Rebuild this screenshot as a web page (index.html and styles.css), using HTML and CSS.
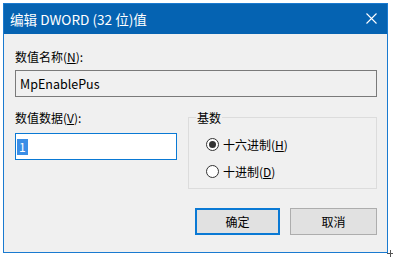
FILE: index.html
```html
<!DOCTYPE html>
<html lang="zh-CN">
<head>
<meta charset="utf-8">
<title>编辑 DWORD (32 位)值</title>
<link rel="stylesheet" href="styles.css">
</head>
<body>
<div class="window">
  <div class="titlebar">
    <span class="title">编辑 DWORD (32 位)值</span>
    <svg class="close" width="11" height="11" viewBox="0 0 11 11"><path d="M0.5 0.5 L10.5 10.5 M10.5 0.5 L0.5 10.5" stroke="#fff" stroke-width="1.1" fill="none"/></svg>
  </div>
  <div class="content">
    <div class="label">数值名称(<u>N</u>):</div>
    <div class="field readonly">MpEnablePus</div>
    <div class="row">
      <div class="col-left">
        <div class="label">数值数据(<u>V</u>):</div>
        <div class="field edit"><span class="sel">1</span></div>
      </div>
      <fieldset class="group">
        <legend>基数</legend>
        <div class="radio"><span class="dot checked"></span><span>十六进制(<u>H</u>)</span></div>
        <div class="radio"><span class="dot"></span><span>十进制(<u>D</u>)</span></div>
      </fieldset>
    </div>
    <div class="buttons">
      <div class="btn default">确定</div>
      <div class="btn">取消</div>
    </div>
  </div>
</div>
<svg class="cursor" width="7" height="7" viewBox="0 0 7 7"><path d="M3.5 0 V7 M0 3.5 H7" stroke="#555" stroke-width="1"/></svg>
</body>
</html>
```
FILE: styles.css
```css
html, body {
  margin: 0;
  padding: 0;
  background: #ffffff;
}
body {
  font-family: "Noto Sans CJK SC", "Noto Sans", sans-serif;
  font-size: 12px;
  line-height: 17px;
  color: #000;
  position: relative;
  width: 393px;
  height: 258px;
  overflow: hidden;
}
.window {
  margin: 3px 0 0 3px;
  width: 385px;
  height: 250px;
  box-sizing: border-box;
  border: 1px solid #1a7ad0;
  background: #f0f0f0;
  display: flex;
  flex-direction: column;
}
.titlebar {
  height: 30px;
  background: #0563b2;
  color: #fff;
  display: flex;
  align-items: center;
  justify-content: space-between;
  padding: 0 10px 0 6px;
  flex: none;
}
.title {
  font-size: 13.6px;
  line-height: 18px;
}
.close {
  display: block;
  margin-top: -1px;
}
.content {
  padding: 14px 10px 0 11px;
  display: flex;
  flex-direction: column;
}
.label {
  height: 17px;
}
.field {
  box-sizing: border-box;
  height: 27px;
  display: flex;
  align-items: center;
}
.readonly {
  margin-top: 5px;
  border: 1px solid #7a7a7a;
  background: #f0f0f0;
  padding-left: 4px;
  font-size: 12.5px;
}
.row {
  margin-top: 12px;
  display: flex;
  gap: 11px;
  align-items: flex-start;
}
.col-left {
  width: 162px;
  flex: none;
}
.edit {
  margin-top: 7px;
  border: 1px solid #0a79d4;
  background: #fff;
  padding-left: 1px;
}
.sel {
  background: #3a8ee6;
  color: #fff;
  padding: 0 2px;
  line-height: 16px;
}
.group {
  margin: 0;
  width: 189px;
  box-sizing: border-box;
  border: 1px solid #dcdcdc;
  padding: 10px 0 8px 7px;
  min-width: 0;
}
.group legend {
  padding: 0 1px;
  margin: 0;
  line-height: 17px;
}
.radio {
  display: flex;
  align-items: center;
  height: 17px;
  padding-left: 10px;
}
.radio + .radio {
  margin-top: 10px;
}
.dot {
  width: 13px;
  height: 13px;
  box-sizing: border-box;
  border: 1px solid #333;
  border-radius: 50%;
  background: #fff;
  margin-right: 4px;
  display: flex;
  align-items: center;
  justify-content: center;
  flex: none;
}
.dot.checked::after {
  content: "";
  width: 7px;
  height: 7px;
  border-radius: 50%;
  background: #333;
}
.buttons {
  margin-top: 19px;
  display: flex;
  justify-content: flex-end;
  gap: 10px;
}
.btn {
  box-sizing: border-box;
  height: 27px;
  width: 87px;
  border: 1px solid #adadad;
  background: #e1e1e1;
  display: flex;
  align-items: center;
  justify-content: center;
}
.btn.default {
  width: 85px;
  border: 2px solid #0a79d4;
}
.cursor {
  position: absolute;
  left: 387px;
  top: 250px;
}
```
